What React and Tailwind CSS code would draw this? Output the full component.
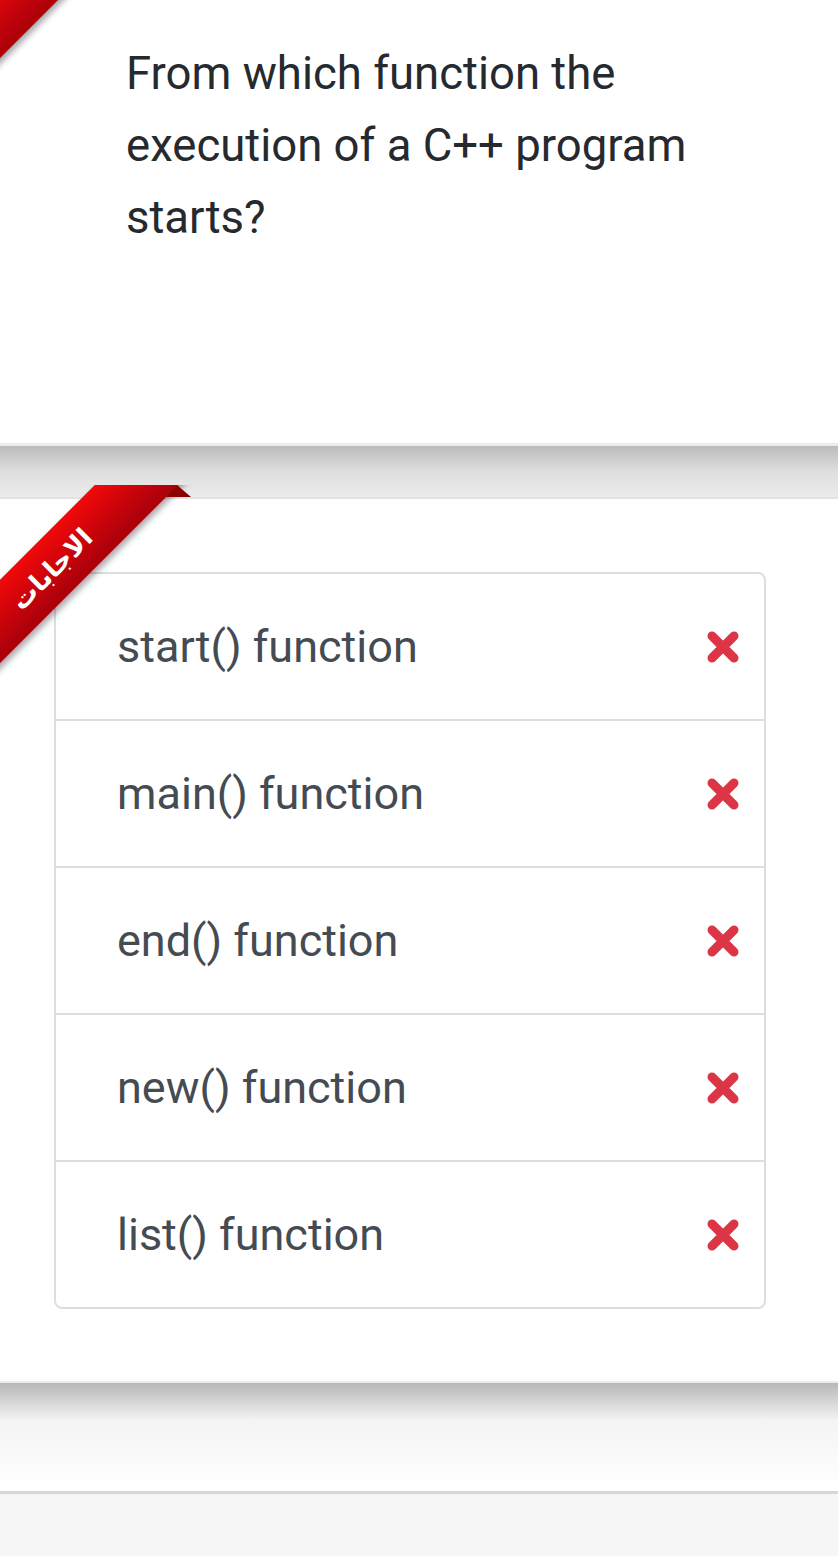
import React from 'react'

const answers = [
  'start() function',
  'main() function',
  'end() function',
  'new() function',
  'list() function',
]

function CrossIcon() {
  return (
    <svg width="34" height="34" viewBox="0 0 34 34" className="shrink-0">
      <path d="M6 6 L28 28 M28 6 L6 28" stroke="#dc3545" strokeWidth="9" strokeLinecap="round" />
    </svg>
  )
}

function App() {
  return (
    <div className="w-[838px] h-[1556px] overflow-hidden bg-[#f6f6f6] font-['Roboto',sans-serif]">
      {/* Question card */}
      <section className="relative h-[446px] bg-white border-b-[3px] border-[#ececec] overflow-hidden">
        <div className="absolute left-[-192px] top-[-21px] w-[400px] h-[59px] -rotate-45 bg-linear-to-b from-[#f20a0a] to-[#a8000a] shadow-[2px_4px_6px_rgba(0,0,0,0.35)]"></div>
        <h1 className="pl-[126px] pr-[60px] pt-[38px] text-[45.5px] leading-[72px] text-[#262a2e] font-normal">
          From which function the execution of a C++ program starts?
        </h1>
      </section>

      <div className="h-[51px] bg-linear-to-b from-[#bcbcbc] via-[#dedede] to-[#ececec]"></div>

      {/* Answers card */}
      <section className="relative bg-white border-t-2 border-[#e2e2e2] pt-[73px] pb-[72px] pl-[54px] pr-[72px]">
        <div className="absolute left-0 top-[-14px] w-[220px] h-[200px] overflow-hidden pointer-events-none z-10">
          <div className="absolute left-[-148px] top-[55px] w-[400px] h-[59px] -rotate-45 flex items-center justify-center bg-linear-to-b from-[#f20a0a] to-[#a8000a] shadow-[2px_4px_6px_rgba(0,0,0,0.35)]">
            <span dir="rtl" className="text-white text-[26px] font-bold font-['DejaVu_Sans',sans-serif]">الاجابات</span>
          </div>
        </div>
        <svg width="32" height="14" viewBox="0 0 32 14" className="absolute left-[160px] top-[-14px] z-10">
          <polygon points="17,0 31,12 6,12" fill="#8a0000" />
        </svg>

        <div className="border-2 border-[#dedede] rounded-lg">
          {answers.map((a, i) => (
            <div
              key={a}
              className={`flex items-center justify-between pl-[61px] pr-[24px] ${
                i < answers.length - 1 ? 'h-[147px] border-b-2 border-[#dedede]' : 'h-[145px]'
              }`}
            >
              <span className="text-[45px] text-[#454b52]">{a}</span>
              <CrossIcon />
            </div>
          ))}
        </div>
      </section>

      <div className="border-t-2 border-[#ececec] h-[110px] bg-linear-to-b from-[#b8b8b8] via-[#f4f4f4] via-35% to-white"></div>
      <div className="h-[3px] bg-[#d6d6d6]"></div>
    </div>
  )
}

export default App
